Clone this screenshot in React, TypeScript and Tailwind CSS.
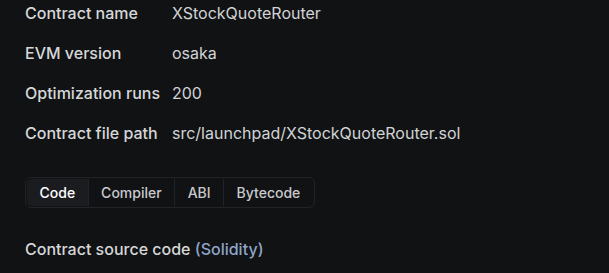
const details: [string, string][] = [
  ["Contract name", "XStockQuoteRouter"],
  ["EVM version", "osaka"],
  ["Optimization runs", "200"],
  ["Contract file path", "src/launchpad/XStockQuoteRouter.sol"],
];

const tabs = ["Code", "Compiler", "ABI", "Bytecode"];

export default function App() {
  return (
    <div
      className="min-h-screen bg-[#111214] px-[25px] pt-[1px] text-[#d6d7d9]"
      style={{ fontFamily: "Inter, 'Noto Sans', sans-serif" }}
    >
      <dl className="flex flex-col gap-4">
        {details.map(([k, v]) => (
          <div key={k} className="flex text-base leading-6">
            <dt className="w-[147px] shrink-0 font-medium">{k}</dt>
            <dd className="text-[#d2d3d5]">{v}</dd>
          </div>
        ))}
      </dl>

      <div className="mt-8 inline-flex h-[31px] rounded-md border border-[#222326] p-px">
        {tabs.map((t, i) => (
          <button
            key={t}
            className={
              "px-[12.5px] text-sm font-medium leading-none " +
              (i === 0
                ? "rounded-l-[5px] bg-[#1b1c1f] text-white"
                : "border-l border-[#222326] text-[#c9cacd]")
            }
          >
            {t}
          </button>
        ))}
      </div>

      <h2 className="mt-[29px] text-base font-medium leading-6">
        Contract source code <span className="text-[#8fa6c6]">(Solidity)</span>
      </h2>
    </div>
  );
}
